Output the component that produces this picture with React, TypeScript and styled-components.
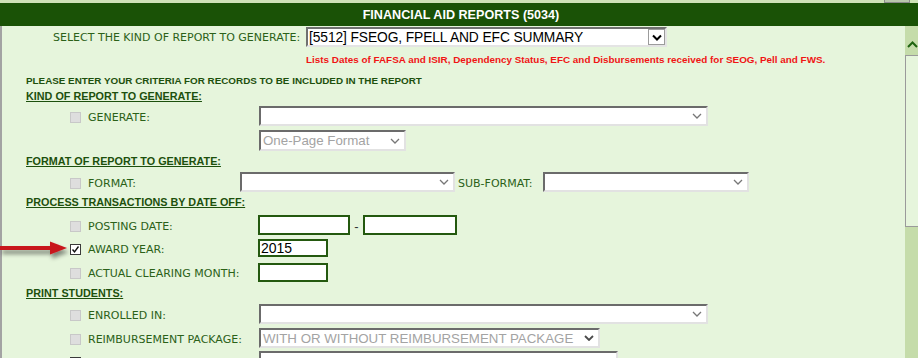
import React from "react";
import styled, { createGlobalStyle } from "styled-components";

const Global = createGlobalStyle`
  html, body { margin: 0; padding: 0; background: #e6f5dc; }
  body { font-family: "DejaVu Sans", Verdana, sans-serif; }
`;

const Page = styled.div`
  position: relative;
  width: 918px;
  height: 358px;
  overflow: hidden;
  display: flex;
  flex-direction: column;
  background: #e6f5dc;
`;

const TopStrip = styled.div`
  height: 3px;
  flex: none;
  background: #cfe2b8;
  display: flex;
  justify-content: flex-end;
  padding-right: 8px;
`;

const TopTab = styled.div`
  width: 24px;
  height: 2px;
  border: 1px solid #8a8a8a;
  border-top: none;
  background: #b9c6ad;
`;

const Header = styled.div`
  height: 23px;
  flex: none;
  background: #1a5206;
  color: #ffffff;
  font: bold 12.6px "Liberation Sans", Arial, sans-serif;
  display: flex;
  align-items: center;
  justify-content: center;
  padding-left: 4px;
`;

const Body = styled.div`
  flex: 1;
  display: flex;
  min-height: 0;
`;

const Content = styled.div`
  flex: 1;
  border-left: 2px solid #a3a3a3;
  padding-top: 1px;
`;

const Scrollbar = styled.div`
  width: 13px;
  flex: none;
  background: #c5dcaa;
  display: flex;
  flex-direction: column;
`;

const ScrollUp = styled.div`
  height: 29px;
  display: flex;
  justify-content: center;
  padding: 15px 0 0 2px;
  box-sizing: border-box;
`;

const ScrollThumb = styled.div`
  height: 172px;
  box-sizing: border-box;
  border: 1px solid #9a9a9a;
  border-right: none;
  background: #e6f5dc;
`;

const TopRow = styled.div`
  display: flex;
  align-items: center;
  height: 20px;
  padding-left: 51px;
`;

const TopLabel = styled.span`
  width: 253px;
  font-size: 11px;
  color: #2b6118;
`;

const TopSelect = styled.div`
  width: 361px;
  height: 20px;
  box-sizing: border-box;
  border-top: 2px solid #707070;
  border-left: 2px solid #707070;
  border-right: 2px solid #e4e4e4;
  border-bottom: 2px solid #e4e4e4;
  background: #ffffff;
  display: flex;
  align-items: center;
  justify-content: space-between;
  padding-left: 1px;
  font: 13.8px "Liberation Sans", Arial, sans-serif;
  color: #000;
  letter-spacing: -0.1px;
`;

const DropButton = styled.div`
  width: 17px;
  height: 16px;
  box-sizing: border-box;
  border: 1px solid #9c9c9c;
  background: #fff;
  display: flex;
  align-items: center;
  justify-content: center;
`;

const Description = styled.div`
  margin: 7px 0 0 304px;
  line-height: 13px;
  height: 13px;
  font: bold 9.9px "Liberation Sans", Arial, sans-serif;
  color: #f01414;
  white-space: nowrap;
`;

const Intro = styled.div`
  margin-top: 8px;
  padding-left: 24px;
  height: 12px;
  line-height: 12px;
  font: bold 9.85px "Liberation Sans", Arial, sans-serif;
  color: #1d500d;
  white-space: nowrap;
`;

const SectionTitle = styled.div<{ $mt: number }>`
  margin-top: ${(p) => p.$mt}px;
  padding-left: 24px;
  height: 12px;
  line-height: 12px;
  font: bold 10.8px "Liberation Sans", Arial, sans-serif;
  color: #1d500d;
  text-decoration: underline;
  white-space: nowrap;
`;

const FieldRow = styled.div<{ $mt: number; $h: number }>`
  display: flex;
  align-items: center;
  margin-top: ${(p) => p.$mt}px;
  height: ${(p) => p.$h}px;
  padding-left: 68px;
`;

const SubRow = styled.div<{ $mt: number }>`
  display: flex;
  margin-top: ${(p) => p.$mt}px;
  padding-left: 257px;
`;

const Check = styled.span<{ $state: "disabled" | "checked" | "empty" }>`
  width: 11px;
  height: 11px;
  flex: none;
  box-sizing: border-box;
  border: 1px solid ${(p) => (p.$state === "disabled" ? "#c8c8c8" : "#3a3a3a")};
  background: ${(p) => (p.$state === "disabled" ? "#dedede" : "#ffffff")};
  display: flex;
  align-items: center;
  justify-content: center;
`;

const Label = styled.span<{ $w: number }>`
  width: ${(p) => p.$w}px;
  flex: none;
  margin-left: 7px;
  font-size: 11px;
  color: #2b6118;
  white-space: nowrap;
`;

const InlineLabel = styled.span`
  margin: 0 10px 0 3px;
  font-size: 11px;
  color: #2b6118;
  white-space: nowrap;
`;

const SelectBox = styled.div<{ $w: number; $h?: number; $muted?: boolean }>`
  align-self: flex-start;
  width: ${(p) => p.$w}px;
  height: ${(p) => p.$h ?? 20}px;
  flex: none;
  box-sizing: border-box;
  border-top: 2px solid #6b6b6b;
  border-left: 2px solid #6b6b6b;
  border-right: 2px solid #e2e2e2;
  border-bottom: 2px solid #e2e2e2;
  background: #ffffff;
  display: flex;
  align-items: center;
  justify-content: space-between;
  padding: 0 4px 0 2px;
  font: 13.3px "Liberation Sans", Arial, sans-serif;
  color: ${(p) => (p.$muted ? "#a3a3a3" : "#000")};
  white-space: nowrap;
`;

const DateInput = styled.input<{ $w: number; $h: number }>`
  align-self: flex-start;
  width: ${(p) => p.$w}px;
  height: ${(p) => p.$h}px;
  flex: none;
  box-sizing: border-box;
  border: 2px solid #24590f;
  background: #ffffff;
  padding: 0 1px;
  margin: 0;
  font: 14px "Liberation Sans", Arial, sans-serif;
  color: #000;
  outline: none;
`;

const Dash = styled.span`
  width: 13px;
  flex: none;
  align-self: center;
  text-align: center;
  font: 13px "Liberation Sans", Arial, sans-serif;
  color: #333;
`;

const ArrowMark = styled.svg`
  position: absolute;
  left: 0;
  top: 238px;
`;

const GreyChevron = ({ dark }: { dark?: boolean }) => (
  <svg width="10" height="6" viewBox="0 0 10 6">
    <path
      d="M1 1 L5 5 L9 1"
      fill="none"
      stroke={dark ? "#4a4a4a" : "#777"}
      strokeWidth={dark ? 1.8 : 1.3}
    />
  </svg>
);

const BlackChevron = () => (
  <svg width="10" height="7" viewBox="0 0 10 7">
    <path d="M1 1.5 L5 5.5 L9 1.5" fill="none" stroke="#000" strokeWidth="2" />
  </svg>
);

const Tick = () => (
  <svg width="9" height="9" viewBox="0 0 9 9">
    <path d="M1.5 4.5 L3.5 6.8 L7.5 1.5" fill="none" stroke="#111" strokeWidth="1.4" />
  </svg>
);

export default function App() {
  return (
    <Page>
      <Global />
      <TopStrip>
        <TopTab />
      </TopStrip>
      <Header>FINANCIAL AID REPORTS (5034)</Header>
      <Body>
        <Content>
          <TopRow>
            <TopLabel>SELECT THE KIND OF REPORT TO GENERATE:</TopLabel>
            <TopSelect>
              <span>[5512] FSEOG, FPELL AND EFC SUMMARY</span>
              <DropButton>
                <BlackChevron />
              </DropButton>
            </TopSelect>
          </TopRow>
          <Description>
            Lists Dates of FAFSA and ISIR, Dependency Status, EFC and Disbursements received for SEOG, Pell and FWS.
          </Description>
          <Intro>PLEASE ENTER YOUR CRITERIA FOR RECORDS TO BE INCLUDED IN THE REPORT</Intro>

          <SectionTitle $mt={3}>KIND OF REPORT TO GENERATE:</SectionTitle>
          <FieldRow $mt={4} $h={22}>
            <Check $state="disabled" />
            <Label $w={171}>GENERATE:</Label>
            <SelectBox $w={449}>
              <span />
              <GreyChevron />
            </SelectBox>
          </FieldRow>
          <SubRow $mt={2}>
            <SelectBox $w={147} $h={21} $muted>
              <span>One-Page Format</span>
              <GreyChevron />
            </SelectBox>
          </SubRow>

          <SectionTitle $mt={4}>FORMAT OF REPORT TO GENERATE:</SectionTitle>
          <FieldRow $mt={5} $h={22}>
            <Check $state="disabled" />
            <Label $w={152}>FORMAT:</Label>
            <SelectBox $w={215}>
              <span />
              <GreyChevron />
            </SelectBox>
            <InlineLabel>SUB-FORMAT:</InlineLabel>
            <SelectBox $w={206}>
              <span />
              <GreyChevron />
            </SelectBox>
          </FieldRow>

          <SectionTitle $mt={2}>PROCESS TRANSACTIONS BY DATE OFF:</SectionTitle>
          <FieldRow $mt={7} $h={22}>
            <Check $state="disabled" />
            <Label $w={170}>POSTING DATE:</Label>
            <DateInput $w={92} $h={20} />
            <Dash>-</Dash>
            <DateInput $w={94} $h={20} />
          </FieldRow>
          <FieldRow $mt={2} $h={20}>
            <Check $state="checked">
              <Tick />
            </Check>
            <Label $w={170}>AWARD YEAR:</Label>
            <DateInput $w={70} $h={18} defaultValue="2015" />
          </FieldRow>
          <FieldRow $mt={4} $h={21}>
            <Check $state="disabled" />
            <Label $w={170}>ACTUAL CLEARING MONTH:</Label>
            <DateInput $w={70} $h={19} />
          </FieldRow>

          <SectionTitle $mt={3}>PRINT STUDENTS:</SectionTitle>
          <FieldRow $mt={5} $h={22}>
            <Check $state="disabled" />
            <Label $w={171}>ENROLLED IN:</Label>
            <SelectBox $w={449}>
              <span />
              <GreyChevron />
            </SelectBox>
          </FieldRow>
          <FieldRow $mt={2} $h={22}>
            <Check $state="disabled" />
            <Label $w={171}>REIMBURSEMENT PACKAGE:</Label>
            <SelectBox $w={341} $muted>
              <span>WITH OR WITHOUT REIMBURSEMENT PACKAGE</span>
              <GreyChevron dark />
            </SelectBox>
          </FieldRow>
          <FieldRow $mt={1} $h={22}>
            <Check $state="empty" />
            <Label $w={171}></Label>
            <SelectBox $w={359}>
              <span />
              <GreyChevron />
            </SelectBox>
          </FieldRow>
        </Content>
        <Scrollbar>
          <ScrollUp>
            <svg width="11" height="7" viewBox="0 0 11 7">
              <path d="M1 6 L5.5 1.5 L10 6" fill="none" stroke="#1f6410" strokeWidth="2" />
            </svg>
          </ScrollUp>
          <ScrollThumb />
        </Scrollbar>
      </Body>
      <ArrowMark width="76" height="26" viewBox="0 0 76 26">
        <defs>
          <filter id="arrowShadow" x="-20%" y="-40%" width="150%" height="220%">
            <feDropShadow dx="2" dy="4" stdDeviation="2" floodColor="#000" floodOpacity="0.45" />
          </filter>
        </defs>
        <g filter="url(#arrowShadow)">
          <rect x="0" y="8" width="54" height="4" fill="#c8161e" />
          <polygon points="50,3.5 67,10 50,16.5" fill="#c8161e" />
        </g>
      </ArrowMark>
    </Page>
  );
}
